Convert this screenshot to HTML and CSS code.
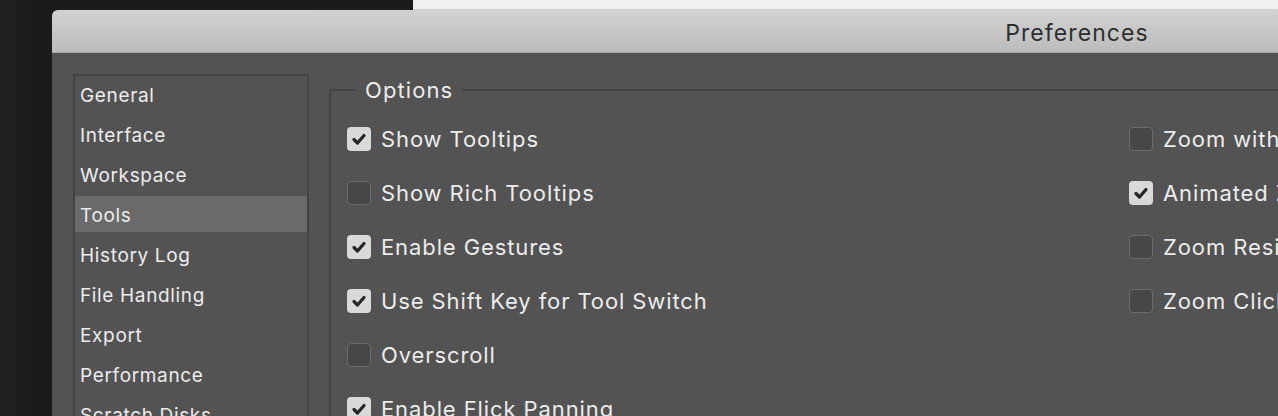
FILE: index.html
```html
<!DOCTYPE html>
<html>
<head>
<meta charset="utf-8">
<link rel="stylesheet" href="styles.css">
</head>
<body>
<div class="backdrop"></div>
<div class="dialog">
  <div class="titlebar"><span class="title">Preferences</span></div>
  <div class="content">
    <ul class="nav">
      <li>General</li>
      <li>Interface</li>
      <li>Workspace</li>
      <li class="sel">Tools</li>
      <li>History Log</li>
      <li>File Handling</li>
      <li>Export</li>
      <li>Performance</li>
      <li>Scratch Disks</li>
      <li>Cursors</li>
      <li>Transparency &amp; Gamut</li>
    </ul>
    <fieldset class="group">
      <legend>Options</legend>
      <div class="cols">
        <div class="col col1">
          <label class="opt"><span class="cb on"><svg viewBox="0 0 24 24"><path d="M7 12.5 L10.5 16 L17 8.5"/></svg></span>Show Tooltips</label>
          <label class="opt"><span class="cb"></span>Show Rich Tooltips</label>
          <label class="opt"><span class="cb on"><svg viewBox="0 0 24 24"><path d="M7 12.5 L10.5 16 L17 8.5"/></svg></span>Enable Gestures</label>
          <label class="opt"><span class="cb on"><svg viewBox="0 0 24 24"><path d="M7 12.5 L10.5 16 L17 8.5"/></svg></span>Use Shift Key for Tool Switch</label>
          <label class="opt"><span class="cb"></span>Overscroll</label>
          <label class="opt"><span class="cb on"><svg viewBox="0 0 24 24"><path d="M7 12.5 L10.5 16 L17 8.5"/></svg></span>Enable Flick Panning</label>
        </div>
        <div class="col col2">
          <label class="opt"><span class="cb"></span>Zoom with Scroll Wheel</label>
          <label class="opt"><span class="cb on"><svg viewBox="0 0 24 24"><path d="M7 12.5 L10.5 16 L17 8.5"/></svg></span>Animated Zoom</label>
          <label class="opt"><span class="cb"></span>Zoom Resize Windows</label>
          <label class="opt"><span class="cb"></span>Zoom Clicked Point to Center</label>
        </div>
      </div>
    </fieldset>
  </div>
</div>
</body>
</html>
```
FILE: styles.css
```css
html, body {
  margin: 0;
  padding: 0;
  height: 416px;
  overflow: hidden;
}
body {
  background: linear-gradient(90deg, #222 0%, #1b1b1b 30px, #1d1d1d 100%);
  font-family: "Inter", "Liberation Sans", sans-serif;
  position: relative;
}
.backdrop {
  position: absolute;
  left: 413px;
  top: 0;
  width: 865px;
  height: 9px;
  background: #f0f0f0;
  border-bottom: 1px solid #cfcfcf;
}
.dialog {
  position: relative;
  margin: 10px 0 0 52px;
  width: 2050px;
  height: 600px;
  background: #535353;
  border-radius: 6px 6px 0 0;
  overflow: hidden;
}
.titlebar {
  height: 42px;
  background: linear-gradient(#d2d2d2, #bcbcbc);
  border-bottom: 1px solid #a6a6a6;
  display: flex;
  align-items: center;
  justify-content: center;
}
.title {
  font-size: 23px;
  color: #2e2e2e;
  letter-spacing: 1.1px;
  margin-top: 3px;
}
.content {
  display: flex;
  align-items: flex-start;
  padding: 21px 0 0 21px;
  gap: 20px;
}
.nav {
  list-style: none;
  margin: 0;
  padding: 0;
  width: 232px;
  border: 2px solid #444;
  display: flex;
  flex-direction: column;
  gap: 4px;
  height: 600px;
}
.nav li {
  height: 36px;
  box-sizing: border-box;
  padding: 4px 0 0 5px;
  line-height: 32px;
  font-size: 19px;
  color: #ececec;
  letter-spacing: 0.65px;
}
.nav li.sel {
  background: #6a6a6a;
}
.group {
  margin: 4px 0 0 0;
  padding: 10px 0 0 16px;
  border: 2px solid #434343;
  border-right: none;
  flex: 1;
  min-width: 0;
  height: 600px;
}
.group legend {
  margin-left: 9px;
  padding: 0 9px;
  font-size: 22px;
  line-height: 24px;
  color: #ececec;
  letter-spacing: 1.1px;
}
.cols {
  display: flex;
}
.col {
  display: flex;
  flex-direction: column;
}
.col1 {
  width: 782px;
}
.opt {
  height: 54px;
  display: flex;
  align-items: center;
  gap: 10px;
  font-size: 22px;
  color: #ececec;
  white-space: nowrap;
  letter-spacing: 0.9px;
}
.cb {
  width: 24px;
  height: 24px;
  box-sizing: border-box;
  border-radius: 4px;
  background: #474747;
  border: 1.5px solid #6c6c6c;
  flex: none;
  display: flex;
}
.cb.on {
  background: #d9d9d9;
  border: none;
}
.cb svg {
  width: 24px;
  height: 24px;
}
.cb path {
  fill: none;
  stroke: #262626;
  stroke-width: 3.2;
  stroke-linecap: round;
  stroke-linejoin: round;
}
```
